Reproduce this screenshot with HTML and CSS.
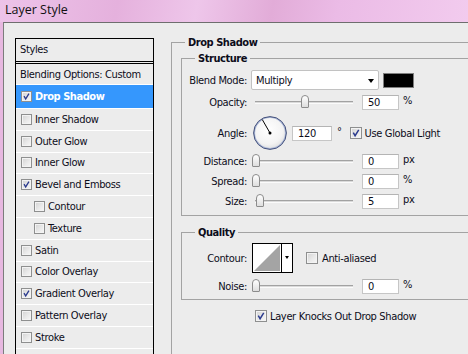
FILE: index.html
```html
<!DOCTYPE html>
<html lang="en">
<head>
    <meta charset="UTF-8">
    <title>Layer Style</title>
    <link rel="stylesheet" href="styles.css">
</head>
<body>
    <div class="titlebar">Layer Style</div>

    <div class="window">
        <!-- Styles list on the left -->
        <div class="styles-panel">
            <div class="panel-head">Styles</div>
            <ul class="style-list">
                <li class="item first">Blending Options: Custom</li>
                <li class="item selected"><span class="check on"><svg viewBox="0 0 11 11"><path d="M2.5 5 L4.5 8.5 L8.5 2"/></svg></span>Drop Shadow</li>
                <li class="item"><span class="check"></span>Inner Shadow</li>
                <li class="item"><span class="check"></span>Outer Glow</li>
                <li class="item"><span class="check"></span>Inner Glow</li>
                <li class="item"><span class="check on"><svg viewBox="0 0 11 11"><path d="M2.5 5 L4.5 8.5 L8.5 2"/></svg></span>Bevel and Emboss</li>
                <li class="item sub"><span class="check"></span>Contour</li>
                <li class="item sub"><span class="check"></span>Texture</li>
                <li class="item"><span class="check"></span>Satin</li>
                <li class="item"><span class="check"></span>Color Overlay</li>
                <li class="item"><span class="check on"><svg viewBox="0 0 11 11"><path d="M2.5 5 L4.5 8.5 L8.5 2"/></svg></span>Gradient Overlay</li>
                <li class="item"><span class="check"></span>Pattern Overlay</li>
                <li class="item"><span class="check"></span>Stroke</li>
            </ul>
        </div>

        <!-- Drop shadow settings -->
        <fieldset class="group outer">
            <legend>Drop Shadow</legend>

            <fieldset class="group inner structure">
                <legend>Structure</legend>

                <div class="row">
                    <span class="label">Blend Mode:</span>
                    <div class="select"><span>Multiply</span><span class="arrow"></span></div>
                    <span class="swatch"></span>
                </div>

                <div class="row gap">
                    <span class="label">Opacity:</span>
                    <div class="slider"><span class="thumb" style="left: 50%"></span></div>
                    <span class="field">50</span>
                    <span class="unit">%</span>
                </div>

                <div class="row angle-row">
                    <span class="label">Angle:</span>
                    <svg class="dial" viewBox="0 0 34 34">
                        <defs>
                            <radialGradient id="face" cx="45%" cy="40%" r="65%">
                                <stop offset="0" stop-color="#ffffff"/>
                                <stop offset="0.7" stop-color="#f3f3f3"/>
                                <stop offset="1" stop-color="#dcdcdc"/>
                            </radialGradient>
                        </defs>
                        <circle cx="17" cy="17" r="15.6" fill="url(#face)" stroke="#a9b6d6" stroke-width="1.4"/>
                        <circle cx="17" cy="17" r="16.4" fill="none" stroke="#34426e" stroke-width="0.9"/>
                        <line x1="17" y1="17" x2="9.3" y2="3.6" stroke="#000" stroke-width="1"/>
                        <circle cx="17" cy="17" r="1.5" fill="#000"/>
                    </svg>
                    <span class="field wide">120</span>
                    <span class="unit deg">°</span>
                    <span class="check big on"><svg viewBox="0 0 11 11"><path d="M2.5 5 L4.5 8.5 L8.5 2"/></svg></span>
                    <span class="opt">Use Global Light</span>
                </div>

                <div class="row near">
                    <span class="label">Distance:</span>
                    <div class="slider"><span class="thumb" style="left: 0%"></span></div>
                    <span class="field">0</span>
                    <span class="unit">px</span>
                </div>

                <div class="row">
                    <span class="label">Spread:</span>
                    <div class="slider"><span class="thumb" style="left: 0%"></span></div>
                    <span class="field">0</span>
                    <span class="unit">%</span>
                </div>

                <div class="row">
                    <span class="label">Size:</span>
                    <div class="slider"><span class="thumb" style="left: 4.5%"></span></div>
                    <span class="field">5</span>
                    <span class="unit">px</span>
                </div>
            </fieldset>

            <fieldset class="group inner quality">
                <legend>Quality</legend>

                <div class="row contour-row">
                    <span class="label">Contour:</span>
                    <div class="contour">
                        <svg class="curve" viewBox="0 0 28 28"><polygon points="1,27 27,1 27,27" fill="#a4a4a4"/></svg>
                        <span class="drop"><span class="arrow small"></span></span>
                    </div>
                    <span class="check big"></span>
                    <span class="opt">Anti-aliased</span>
                </div>

                <div class="row noise-row">
                    <span class="label">Noise:</span>
                    <div class="slider"><span class="thumb" style="left: 0%"></span></div>
                    <span class="field">0</span>
                    <span class="unit">%</span>
                </div>
            </fieldset>

            <div class="row knockout">
                <span class="check big on"><svg viewBox="0 0 11 11"><path d="M2.5 5 L4.5 8.5 L8.5 2"/></svg></span>
                <span class="opt">Layer Knocks Out Drop Shadow</span>
            </div>
        </fieldset>
    </div>
</body>
</html>
```

FILE: styles.css
```css
body {
    margin: 0;
    width: 468px;
    height: 354px;
    overflow: hidden;
    background: #e7b8e0;
    font-family: Tahoma, "DejaVu Sans Condensed", "Liberation Sans", sans-serif;
    font-size: 11px;
    letter-spacing: -0.35px;
    color: #0c0c1a;
}

.titlebar {
    height: 22px;
    padding-left: 5px;
    line-height: 20px;
    font-family: "Open Sans", "Noto Sans", sans-serif;
    font-size: 12.5px;
    letter-spacing: 0;
    color: #111;
    background: linear-gradient(100deg, #edc3e9 0%, #e5b1dd 25%, #eec6ea 42%, #e2acd8 58%, #ebbbe6 72%, #f2cbee 100%);
}

.window {
    display: flex;
    align-items: flex-start;
    box-sizing: border-box;
    height: 332px;
    margin-left: 3px;
    padding: 15px 0 0 11px;
    border-top: 1px solid #6e6e6e;
    border-left: 1px solid #7c7c7c;
    background: #ececec;
    overflow: hidden;
}

/* left column */
.styles-panel {
    flex: none;
    box-sizing: border-box;
    width: 139px;
    height: 330px;
    border: 1px solid #000;
    border-bottom: none;
}

.panel-head {
    height: 22px;
    line-height: 21px;
    padding-left: 4px;
    border-bottom: 1px solid #000;
}

.style-list {
    list-style: none;
    margin: 1px 0 0;
    padding: 0;
    border-top: 1px solid #000;
}

.item {
    display: flex;
    align-items: center;
    height: 20.8px;
    padding-left: 5px;
    border-bottom: 1px solid #fff;
    white-space: nowrap;
}

.item.first {
    height: 20px;
    padding-left: 4px;
}

.item.selected {
    height: 23px;
    background: #3597fd;
    color: #fff;
    font-weight: bold;
    letter-spacing: -0.45px;
}

.item.sub {
    padding-left: 18px;
}

/* checkboxes */
.check {
    flex: none;
    display: inline-block;
    box-sizing: border-box;
    width: 11px;
    height: 11px;
    margin-right: 3px;
    border: 1px solid #8e8f8f;
    background: linear-gradient(135deg, #d2d2d2 0%, #e9e9e9 55%, #f7f7f7 100%);
    box-shadow: inset 0 0 0 1px #f3f3f3;
}

.check.big {
    width: 12px;
    height: 12px;
}

.check svg {
    display: block;
    width: 100%;
    height: 100%;
}

.check path {
    fill: none;
    stroke: #2b3b8e;
    stroke-width: 1.6;
}

/* group boxes */
.group {
    margin: 0;
    min-width: 0;
    border: 1px solid #a3a3a3;
}

.group legend {
    padding: 0 3px;
    line-height: 13px;
    font-weight: bold;
    letter-spacing: -0.45px;
}

.outer {
    flex: none;
    width: 330px;
    height: 330px;
    margin: -2px 0 0 17px;
    padding: 3px 0 0 9px;
}

.outer > legend {
    margin-left: 4px;
}

.inner > legend {
    margin-left: 13px;
}

.structure {
    padding: 5px 0 4px 0;
}

.quality {
    margin-top: 10px;
    padding: 4px 0 3px 0;
}

/* rows of controls */
.row {
    display: flex;
    align-items: center;
    height: 20px;
    white-space: nowrap;
}

.row.gap {
    margin-top: 2px;
}

.angle-row {
    height: 34px;
    margin-top: 4px;
}

.row.near {
    margin-top: 1px;
}

.label {
    flex: none;
    width: 65px;
    margin-right: 4px;
    text-align: right;
}

.select {
    display: flex;
    align-items: center;
    box-sizing: border-box;
    width: 128px;
    height: 20px;
    padding-left: 4px;
    border: 1px solid #c2c2c2;
    border-radius: 2px;
    background: #fff;
}

.arrow {
    width: 0;
    height: 0;
    margin: 1px 4px 0 auto;
    border-left: 3.5px solid transparent;
    border-right: 3.5px solid transparent;
    border-top: 4px solid #000;
}

.arrow.small {
    margin: 0;
    border-left-width: 2.5px;
    border-right-width: 2.5px;
    border-top-width: 3px;
}

.swatch {
    width: 31px;
    height: 15px;
    margin-left: 4px;
    box-sizing: border-box;
    border: 1px solid #7f7f7f;
    background: #000;
}

.slider {
    flex: none;
    position: relative;
    box-sizing: border-box;
    width: 98px;
    height: 3px;
    margin: 0 9px 0 4px;
    border-top: 1px solid #a2a2a2;
    border-bottom: 1px solid #fbfbfb;
    background: #dadada;
}

.thumb {
    position: absolute;
    top: -7px;
    box-sizing: border-box;
    width: 8px;
    height: 13px;
    margin-left: -3px;
    border: 1px solid #8c8c8c;
    border-radius: 4px 4px 1px 1px;
    background: linear-gradient(#ffffff, #dedede);
}

.field {
    flex: none;
    box-sizing: border-box;
    width: 37px;
    height: 15px;
    padding-left: 5px;
    line-height: 13px;
    border: 1px solid #c6c6c6;
    border-top-color: #b4b4b4;
    background: #fff;
}

.field.wide {
    width: 40px;
    margin-left: 5px;
}

.unit {
    margin: 0 0 3px 4px;
}

.unit.deg {
    margin: 0 8px 4px 5px;
}

.dial {
    flex: none;
    width: 34px;
    height: 34px;
    margin-left: 2px;
}

/* quality */
.contour-row {
    height: 30px;
}

.contour {
    display: flex;
    box-sizing: border-box;
    width: 41px;
    height: 30px;
    margin: 0 13px 0 1px;
    border: 1px solid #000;
    background: #fff;
}

.curve {
    display: block;
    width: 28px;
    height: 28px;
}

.drop {
    display: flex;
    justify-content: center;
    flex: 1;
    padding-top: 12px;
    border-left: 1px solid #000;
    background: #fff;
}

.contour-row .check {
    margin-right: 4px;
}

.noise-row {
    margin-top: 3px;
}

.knockout {
    margin: 6px 0 0 74px;
}
```
